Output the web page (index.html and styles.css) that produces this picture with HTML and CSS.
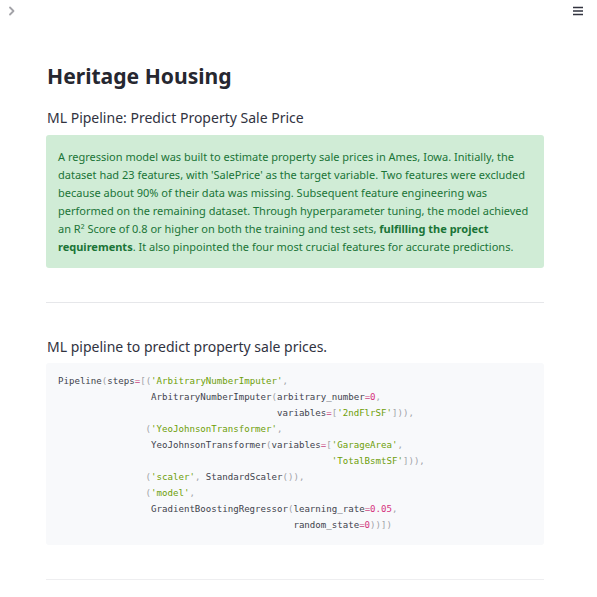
FILE: index.html
```html
<!DOCTYPE html>
<html lang="en">
<head>
<meta charset="utf-8">
<title>Heritage Housing</title>
<link rel="stylesheet" href="styles.css">
</head>
<body>
<header class="topbar">
  <button class="icon-btn chevron" aria-label="Open sidebar">
    <svg width="8" height="10" viewBox="0 0 8 10"><path d="M2 1.5 L5.5 5 L2 8.5" fill="none" stroke="#a3a3a8" stroke-width="1.8" stroke-linecap="round" stroke-linejoin="round"/></svg>
  </button>
  <button class="icon-btn menu" aria-label="Main menu">
    <svg width="12" height="10" viewBox="0 0 12 10"><path d="M1 1.5 H11 M1 5 H11 M1 8.5 H11" stroke="#31333f" stroke-width="1.3"/></svg>
  </button>
</header>
<main class="main">
  <h1 class="title">Heritage Housing</h1>
  <p class="subtitle">ML Pipeline: Predict Property Sale Price</p>
  <div class="alert">A regression model was built to estimate property sale prices in Ames, Iowa. Initially, the dataset had 23 features, with 'SalePrice' as the target variable. Two features were excluded because about 90% of their data was missing. Subsequent feature engineering was performed on the remaining dataset. Through hyperparameter tuning, the model achieved an R² Score of 0.8 or higher on both the training and test sets, <strong>fulfilling the project</strong> <strong>requirements</strong>. It also pinpointed the four most crucial features for accurate predictions.</div>
  <hr class="divider first">
  <h3 class="section">ML pipeline to predict property sale prices.</h3>
  <pre class="code"><code>Pipeline<span class="p">(</span>steps<span class="o">=</span><span class="p">[(</span><span class="s">'ArbitraryNumberImputer'</span><span class="p">,</span>
                 ArbitraryNumberImputer<span class="p">(</span>arbitrary_number<span class="o">=</span><span class="n">0</span><span class="p">,</span>
                                        variables<span class="o">=</span><span class="p">[</span><span class="s">'2ndFlrSF'</span><span class="p">])),</span>
                <span class="p">(</span><span class="s">'YeoJohnsonTransformer'</span><span class="p">,</span>
                 YeoJohnsonTransformer<span class="p">(</span>variables<span class="o">=</span><span class="p">[</span><span class="s">'GarageArea'</span><span class="p">,</span>
                                                  <span class="s">'TotalBsmtSF'</span><span class="p">])),</span>
                <span class="p">(</span><span class="s">'scaler'</span><span class="p">,</span> StandardScaler<span class="p">()),</span>
                <span class="p">(</span><span class="s">'model'</span><span class="p">,</span>
                 GradientBoostingRegressor<span class="p">(</span>learning_rate<span class="o">=</span><span class="n">0.05</span><span class="p">,</span>
                                           random_state<span class="o">=</span><span class="n">0</span><span class="p">))])</span></code></pre>
  <hr class="divider second">
</main>
</body>
</html>
```

FILE: styles.css
```css
html, body {
  margin: 0;
  padding: 0;
  background: #ffffff;
}

body {
  font-family: "Noto Sans", "Roboto", "Liberation Sans", sans-serif;
  color: #31333f;
}

.topbar {
  height: 22px;
  display: flex;
  justify-content: space-between;
  align-items: flex-start;
  padding: 0 13px 0 8px;
}

.icon-btn {
  background: none;
  border: 0;
  padding: 0;
  margin: 0;
  display: block;
  line-height: 0;
}

.chevron {
  margin-top: 6px;
}

.menu {
  margin-top: 6px;
}

.main {
  width: 498px;
  padding-left: 46px;
}

.title {
  margin: 40px 0 0 1px;
  font-size: 21.1px;
  line-height: 28px;
  font-weight: 700;
  color: #262730;
}

.subtitle {
  margin: 18px 0 0 1px;
  font-size: 14px;
  line-height: 20px;
  color: #31333f;
}

.alert {
  margin-top: 7px;
  padding: 13px 12px 12px 12px;
  background: #d0ecd6;
  color: #1a7436;
  border-radius: 3px;
  font-size: 11px;
  line-height: 18px;
}

.alert strong {
  font-weight: 700;
}

.divider {
  margin: 0;
  border: 0;
  height: 1px;
  background: #e6e7ea;
}

.divider.first {
  margin-top: 34px;
}

.divider.second {
  margin-top: 34px;
  background: #eeeef0;
}

.section {
  margin: 34px 0 0 1px;
  font-size: 14px;
  line-height: 20px;
  font-weight: 400;
  color: #31333f;
}

.code {
  margin: 6px 0 0 0;
  padding: 10px 12px 12px 12px;
  background: #f8f9fb;
  border-radius: 3px;
  font-family: "DejaVu Sans Mono", "Liberation Mono", monospace;
  font-size: 9.1px;
  line-height: 16px;
  color: #41434d;
  white-space: pre;
  overflow: hidden;
}

.code .p {
  color: #a1a3a8;
}

.code .s {
  color: #6e9e08;
}

.code .n {
  color: #d6347e;
}

.code .o {
  color: #c9487f;
}
```
